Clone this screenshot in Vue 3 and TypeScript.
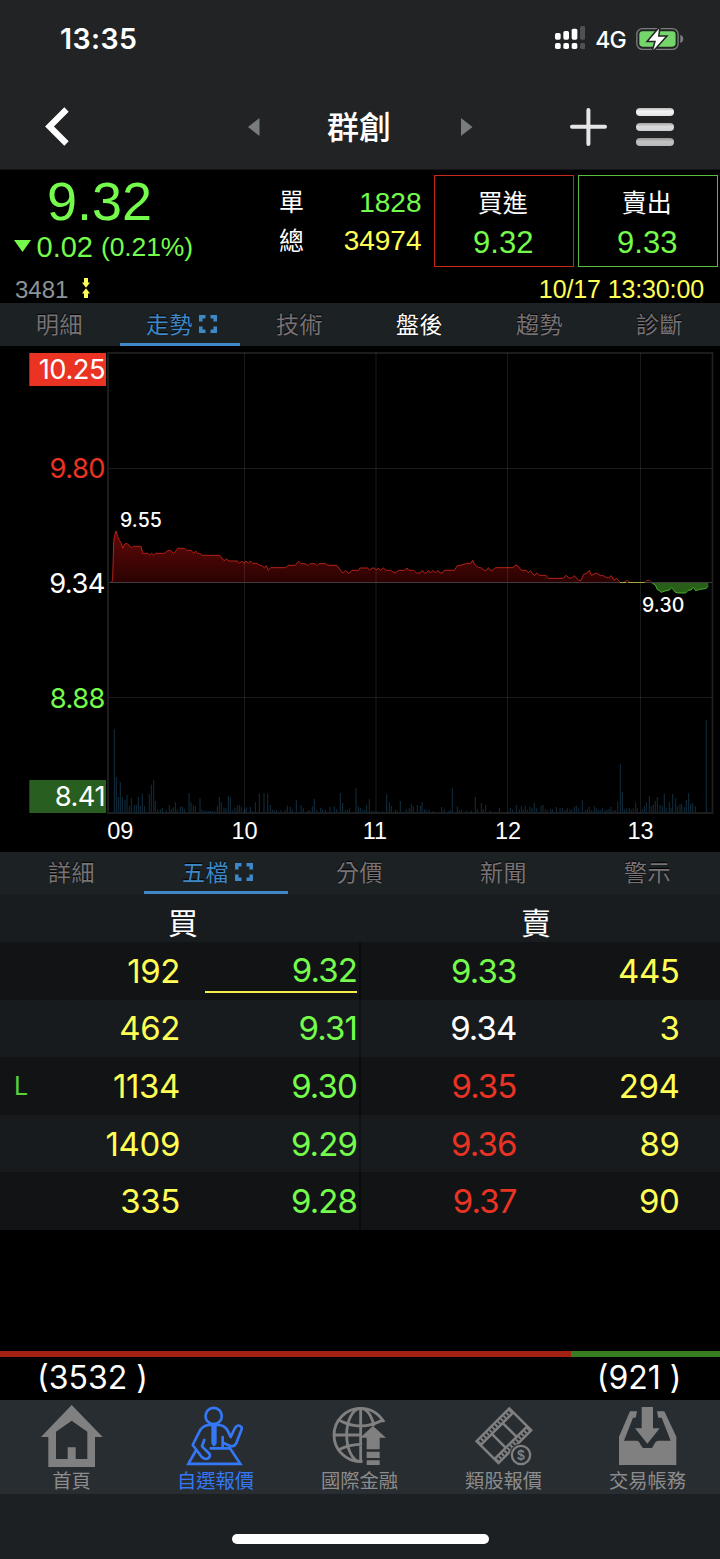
<script setup lang="ts">
interface Tab { label: string; state?: 'active' | 'bright' }
interface Level { bidQty: number; bid: string; ask: string; askQty: number; askTone: 'up' | 'down' | 'flat'; mark?: string; last?: boolean }

const topTabs: Tab[] = [
  { label: '明細' }, { label: '走勢', state: 'active' }, { label: '技術' },
  { label: '盤後', state: 'bright' }, { label: '趨勢' }, { label: '診斷' },
]
const lowerTabs: Tab[] = [
  { label: '詳細' }, { label: '五檔', state: 'active' }, { label: '分價' }, { label: '新聞' }, { label: '警示' },
]
const levels: Level[] = [
  { bidQty: 192, bid: '9.32', ask: '9.33', askQty: 445, askTone: 'down', last: true },
  { bidQty: 462, bid: '9.31', ask: '9.34', askQty: 3, askTone: 'flat' },
  { bidQty: 1134, bid: '9.30', ask: '9.35', askQty: 294, askTone: 'up', mark: 'L' },
  { bidQty: 1409, bid: '9.29', ask: '9.36', askQty: 89, askTone: 'up' },
  { bidQty: 335, bid: '9.28', ask: '9.37', askQty: 90, askTone: 'up' },
]
const bidTotal = 3532
const askTotal = 921
const bidShare = (bidTotal / (bidTotal + askTotal)) * 100 + '%'

// Series coordinates are in thirds of a pixel.
const rise = '335,1747 338,1738 341,1628 344,1606 348,1593 353,1610 359,1622 364,1630 368,1645 375,1631 382,1631 389,1638 394,1644 400,1639 423,1639 428,1660 443,1660 449,1665 455,1660 461,1665 467,1660 494,1660 502,1652 513,1652 521,1661 533,1645 554,1645 560,1651 573,1651 581,1660 587,1653 592,1660 599,1660 606,1666 659,1666 672,1682 680,1677 687,1683 712,1683 718,1690 725,1683 732,1690 738,1683 745,1690 751,1683 758,1690 772,1690 778,1696 785,1696 793,1704 799,1697 805,1711 812,1703 857,1703 864,1696 885,1696 896,1684 903,1691 915,1691 924,1697 930,1691 945,1691 951,1697 957,1691 977,1691 983,1696 1010,1696 1028,1719 1037,1711 1044,1719 1049,1719 1056,1711 1076,1711 1080,1704 1102,1704 1109,1710 1117,1704 1123,1704 1129,1710 1135,1704 1141,1711 1150,1704 1158,1711 1172,1711 1185,1720 1195,1711 1214,1711 1221,1704 1227,1711 1241,1711 1249,1719 1260,1719 1267,1711 1273,1719 1279,1719 1285,1711 1291,1719 1299,1711 1306,1719 1314,1711 1320,1719 1327,1719 1333,1711 1363,1711 1372,1697 1386,1695 1400,1690 1413,1690 1418,1681 1424,1694 1435,1702 1444,1704 1453,1711 1459,1711 1465,1703 1471,1711 1478,1711 1486,1703 1540,1703 1545,1696 1552,1696 1564,1711 1579,1711 1585,1718 1591,1712 1603,1727 1610,1719 1619,1726 1638,1726 1645,1735 1689,1735 1699,1726 1707,1734 1715,1734 1723,1727 1735,1741 1743,1741 1751,1723 1761,1719 1768,1711 1774,1726 1789,1719 1801,1727 1808,1726 1820,1733 1827,1733 1834,1727 1842,1741 1849,1735 1860,1747'
const fall = '1953,1747 1966,1755 1972,1769 1978,1772 1984,1777 1998,1772 2009,1770 2014,1763 2021,1770 2026,1777 2036,1779 2057,1779 2064,1771 2073,1770 2080,1762 2087,1772 2099,1768 2110,1767 2118,1765 2125,1759'
const early = '343,148 349,291 355,351 361,306 367,352 375,360 381,345 388,378 394,354 403,376 409,374 415,351 421,377 427,342 434,378 448,342 454,314 461,300 466,363 473,388 481,388 487,384 499,390 508,375 514,387 520,382 526,367 532,388 541,381 547,379 553,386 567,339 573,367 580,376 586,378 600,354 606,389 613,393 619,392 625,393 631,393 637,393 643,394 652,379 658,351 664,367 672,382 678,385 685,348 691,352 697,390 705,384 712,377 718,375 724,380 733,387 739,382 751,381 757,393 766,367 778,341 792,339 803,341 811,375 817,389 823,391 830,391 843,390 856,390 862,377 871,381 877,390 889,360 903,375 910,384 922,393 928,390 937,379 943,357 950,390 962,384 968,388 976,390 990,381 1003,379 1010,388 1021,339 1028,369 1036,391 1042,389 1049,385 1068,325 1075,379'
const late = '1,384 8,390 15,389 20,376 28,358 35,393 42,394 55,394 68,394 80,343 88,367 94,377 106,389 112,392 121,363 139,388 148,384 154,373 160,379 172,375 181,378 186,366 193,388 199,389 207,389 220,394 245,381 253,388 265,394 271,390 277,324 292,379 298,391 304,390 319,393 334,392 346,351 352,388 364,369 370,388 377,375 390,392 418,383 451,384 458,389 469,375 478,388 484,379 490,388 496,377 502,389 510,381 516,385 523,368 529,384 543,378 549,375 556,388 562,391 571,387 577,388 589,381 600,385 607,384 615,390 622,385 630,388 636,389 643,380 649,377 656,385 667,361 676,391 682,387 688,381 695,390 703,378 709,385 715,389 721,391 727,383 735,391 741,389 747,387 753,381 760,391 766,390 773,366 781,252 787,337 793,387 800,385 808,384 814,389 820,385 827,367 832,385 847,387 853,379 859,367 868,348 874,379 880,373 886,363 892,351 900,375 907,378 913,342 919,384 928,366 933,384 938,342 947,355 953,378 960,373 965,373 973,381 979,360 986,340 992,373 998,369 1006,379 1039,121'
const bars = (src: string, shift: number): string =>
  src.split(' ').map((p) => {
    const [x, y] = p.split(',').map(Number)
    return `M${x + shift} 2438V${y + 2040}`
  }).join('')
const volume = bars(early, 0) + bars(late, 1080)
</script>

<template>
  <div class="screen">
    <header class="top">
      <div class="status">
        <span class="clock">13:35</span>
        <div class="status-right">
          <svg class="signal" viewBox="586 78 92 69">
            <g fill="#fff">
              <rect x="586" y="99" width="17" height="20" rx="5" /><rect x="611" y="93" width="17" height="26" rx="5" /><rect x="636" y="86" width="17" height="33" rx="5" />
              <rect x="586" y="129" width="17" height="18" rx="5" /><rect x="611" y="129" width="17" height="18" rx="5" /><rect x="636" y="129" width="17" height="18" rx="5" />
            </g>
            <g fill="#505153"><rect x="661" y="78" width="16" height="41" rx="5" /><rect x="661" y="129" width="16" height="18" rx="5" /></g>
          </svg>
          <span class="network">4G</span>
          <svg class="battery" viewBox="830 82 143 66">
            <rect x="832.5" y="84" width="124" height="62" rx="17" fill="none" stroke="#7b7c7e" stroke-width="4" />
            <rect x="840" y="92" width="109" height="46" rx="10" fill="#75d66b" />
            <path d="M963 103q9 3 9 12t-9 12z" fill="#7b7c7e" />
            <path d="M899 84l-31 36h22l-8 28 36-40h-22z" fill="#fff" stroke="#222325" stroke-width="9" paint-order="stroke" />
          </svg>
        </div>
      </div>
      <nav class="nav">
        <svg class="back" viewBox="0 0 26 40"><path d="M21.5 2.5L4.5 19.5 21.5 36.5" fill="none" stroke="#fff" stroke-width="6.2" /></svg>
        <svg class="arrow prev" viewBox="0 0 12 18"><path d="M0 9L11.5 0v18z" /></svg>
        <h1>群創</h1>
        <svg class="arrow next" viewBox="0 0 12 18"><path d="M11.5 9L0 0v18z" /></svg>
        <svg class="plus" viewBox="0 0 37 38"><path d="M2 18.7H35M18.4 2V36" fill="none" stroke="#e6e6e6" stroke-width="4" stroke-linecap="round" /></svg>
        <div class="menu"><i></i><i></i><i></i></div>
      </nav>
    </header>

    <section class="quote">
      <div class="quote-main">
        <div class="price">
          <strong>9.32</strong>
          <div class="change">
            <svg viewBox="0 0 17 12"><path d="M0 0H17L8.5 12z" fill="#75fb4c" /></svg>
            <span class="diff">0.02</span><span class="pct">(0.21%)</span>
          </div>
        </div>
        <div class="volumes">
          <div><span>單</span><b class="down">1828</b></div>
          <div><span>總</span><b class="qty">34974</b></div>
        </div>
        <div class="deal buy"><span>買進</span><b>9.32</b></div>
        <div class="deal sell"><span>賣出</span><b>9.33</b></div>
      </div>
      <div class="meta">
        <span class="code">3481</span>
        <svg viewBox="0 0 8 20"><path d="M2 0H6V4.5H8L4 9.7 0 4.5H2zM4 10.3L8 15.5H6V20H2V15.5H0z" fill="#ffff54" /></svg>
        <time>10/17 13:30:00</time>
      </div>
    </section>

    <div class="tabs six">
      <div v-for="t in topTabs" :key="t.label" class="tab" :class="t.state">
        <span>{{ t.label }}</span>
        <svg v-if="t.state === 'active'" viewBox="0 0 18 18"><path d="M1.8 6.5V1.8H6.5M11.5 1.8H16.2V6.5M16.2 11.5V16.2H11.5M6.5 16.2H1.8V11.5" /></svg>
      </div>
    </div>

    <svg class="chart" viewBox="0 346 720 505.5">
      <defs>
        <linearGradient id="riseFill" x1="0" y1="1593" x2="0" y2="1747" gradientUnits="userSpaceOnUse">
          <stop offset="0" stop-color="#610908" /><stop offset="1" stop-color="#2b0202" />
        </linearGradient>
      </defs>
      <rect x="108" y="353" width="604.5" height="460" fill="none" stroke="#212121" stroke-width="1.7" />
      <g transform="scale(.333333)">
        <polygon :points="rise" fill="url(#riseFill)" />
        <polyline :points="rise" fill="none" stroke="#b62018" stroke-width="3" />
        <path d="M1872 1747L1881 1741 1889 1747M1935 1747L1940 1741H1949L1956 1749" fill="none" stroke="#92221a" stroke-width="3" />
        <polygon :points="fall + ' 2125,1747'" fill="#285f19" />
        <polyline :points="fall" fill="none" stroke="#49ab30" stroke-width="3" />
        <path :d="volume" stroke="#102b3b" stroke-width="3.3" />
      </g>
      <path d="M109 468.5H712M109 697.5H712M244.5 353V813M376 353V813M507.5 353V813M640.5 353V813" stroke="#fff" stroke-opacity=".1" />
      <path d="M109 582.5H712" stroke="#423a3e" stroke-width="1" />
      <path d="M620 582.5H626M628.5 582.5H645" stroke="#aaa83f" stroke-width="1" />
      <rect x="29.3" y="353" width="76.7" height="33" fill="#eb3323" />
      <rect x="29.3" y="780" width="76.7" height="33" fill="#285f20" />
      <g class="axis" text-anchor="end">
        <text x="105" y="379" fill="#fff">10.25</text>
        <text x="105" y="477.5" fill="#eb3323">9.80</text>
        <text x="105" y="592.5" fill="#fff">9.34</text>
        <text x="105" y="707.5" fill="#75fb4c">8.88</text>
        <text x="105" y="805.5" fill="#fff">8.41</text>
      </g>
      <g class="peak" fill="#fff"><text x="120" y="526.5">9.55</text><text x="642" y="611.5">9.30</text></g>
      <g class="hours" fill="#fff" text-anchor="middle">
        <text x="120.3" y="838.5">09</text><text x="244.5" y="838.5">10</text><text x="375" y="838.5">11</text><text x="508" y="838.5">12</text><text x="640.5" y="838.5">13</text>
      </g>
    </svg>

    <div class="tabs five">
      <div v-for="t in lowerTabs" :key="t.label" class="tab" :class="t.state">
        <span>{{ t.label }}</span>
        <svg v-if="t.state === 'active'" viewBox="0 0 18 18"><path d="M1.8 6.5V1.8H6.5M11.5 1.8H16.2V6.5M16.2 11.5V16.2H11.5M6.5 16.2H1.8V11.5" /></svg>
      </div>
    </div>

    <section class="book">
      <div class="book-head"><span>買</span><span>賣</span></div>
      <div v-for="l in levels" :key="l.bid" class="level">
        <span class="mark">{{ l.mark }}</span>
        <span class="qty">{{ l.bidQty }}</span>
        <span class="bid down" :class="{ last: l.last }">{{ l.bid }}</span>
        <span :class="l.askTone">{{ l.ask }}</span>
        <span class="qty">{{ l.askQty }}</span>
      </div>
    </section>

    <section class="totals">
      <div class="balance"><i :style="{ width: bidShare }"></i></div>
      <div class="sums"><span>({{ bidTotal }}<em>)</em></span><span>({{ askTotal }}<em>)</em></span></div>
    </section>

    <footer class="bottom">
      <div class="item">
        <svg viewBox="0 180 432 204"><path fill-rule="evenodd" d="M215 195L308 291H285V381H145V291H123zM168 275L215 242 262 275V357H227V322H203V357H168z" fill="#808080" /></svg>
        <span>首頁</span>
      </div>
      <div class="item selected">
        <svg viewBox="432 180 432 204">
          <g fill="none" stroke="#3478f6" stroke-width="8" stroke-linejoin="round" stroke-linecap="round">
            <circle cx="641" cy="228" r="24.5" />
            <path d="M625 255C609 257 603 264 597 277L578 315 600 344Q609 357 620 357 632 353 629 342L606 319 613 300" />
            <path d="M625 255H657C675 257 681 265 692 291L705 264Q714 250 725 262V268L709 309Q703 323 689 317L669 308M668 291V323" />
            <path d="M587 333L565 371.5H721L690 325H632" stroke-linejoin="miter" />
            <path d="M638 257V309L642 315 646 309V257" />
          </g>
        </svg>
        <span>自選報價</span>
      </div>
      <div class="item">
        <svg viewBox="864 180 432 204">
          <clipPath id="globeClip"><path d="M980 190H1160V243L1112 262 1087 279V380H980z" /></clipPath>
          <g clip-path="url(#globeClip)" fill="none" stroke="#808080" stroke-width="8.5">
            <circle cx="1082" cy="285" r="80" /><ellipse cx="1082" cy="285" rx="42" ry="80" />
            <path d="M1082 204V368M1002 285H1082M1016 240Q1082 276 1148 240M1016 329Q1048 313 1088 313" />
          </g>
          <path d="M1119 258L1158 293H1139V328H1100V293H1080zM1100 335H1139V354H1100zM1100 361H1139V375H1100z" fill="#808080" />
        </svg>
        <span>國際金融</span>
      </div>
      <div class="item">
        <svg viewBox="1296 180 432 204">
          <g transform="translate(1528 201) rotate(135)" fill="none" stroke="#808080">
            <path d="M3 -3H142V-96H3zM3 -20H142M3 -79H142M48 -79V-20M94 -79V-20" stroke-width="7.5" />
            <path d="M4 -11.5H142M4 -87.5H142" stroke-width="10" stroke-dasharray="6 6" />
          </g>
          <circle cx="1563" cy="345" r="34" fill="#282d31" />
          <circle cx="1563" cy="345" r="27.5" fill="none" stroke="#808080" stroke-width="7" />
          <text x="1563" y="360" text-anchor="middle" class="coin">$</text>
        </svg>
        <span>類股報價</span>
      </div>
      <div class="item">
        <svg viewBox="1728 180 432 204">
          <path d="M1925 201H1959V265H1979L1942 311 1905 265H1925zM1857 375V290L1890 214H1911L1907 233H1899L1872 302H1911Q1918 303 1922 315L1929 324H1956L1963 312Q1966 303 1974 302H2012L1985 233H1975L1971 214H1993L2029 290V375z" fill="#808080" />
        </svg>
        <span>交易帳務</span>
      </div>
    </footer>
    <div class="home-area"><i></i></div>
  </div>
</template>

<style>
html, body { background: #000; }
</style>

<style scoped>
* { box-sizing: border-box; }
.screen { width: 720px; height: 1559px; overflow: hidden; display: flex; flex-direction: column; background: #000; color: #fff; font-family: "Liberation Sans", "Noto Sans CJK TC", sans-serif; }
b, em, i, h1, strong { font-weight: 400; font-style: normal; margin: 0; }
svg { display: block; flex: none; }

.top { height: 170px; background: #222325; border-bottom: 1px solid #151517; flex: none; }
.status { height: 84px; display: flex; align-items: center; justify-content: space-between; padding: 0 36px 6px 60px; }
.clock { font: 600 28.5px/34px Inter, sans-serif; letter-spacing: .4px; }
.status-right { display: flex; align-items: center; }
.signal { width: 30.7px; height: 23px; margin-top: -3px; }
.network { font: 500 23px/28px Inter, sans-serif; letter-spacing: -.8px; margin: 1px 0 0 10px; }
.battery { width: 47.6px; height: 22px; margin: -1px 0 0 10.5px; }
.nav { height: 85px; display: flex; align-items: center; padding-left: 45px; }
.back { width: 26px; height: 40px; margin-top: 1px; }
.arrow { width: 12px; height: 18px; fill: #777d7f; }
.prev { margin-left: 177px; }
.nav h1 { width: 66px; margin: 2px 0 0 67px; font-size: 32px; line-height: 40px; font-weight: 500; }
.next { margin-left: 67.5px; }
.plus { width: 37px; height: 38px; margin: 1px 0 0 97px; }
.menu { width: 38px; height: 38px; margin: 0 0 0 29px; display: flex; flex-direction: column; justify-content: space-between; }
.menu i { height: 8px; border-radius: 4px; background: linear-gradient(#b9b9b9, #f5f5f5 40%, #e3e3e3); }
.menu i:nth-child(2) { background: linear-gradient(#a4a4a4, #dadada 45%, #cfcfcf); }
.menu i:nth-child(3) { background: linear-gradient(#969696, #c2c2c2 45%, #b9b9b9); }

.quote { height: 133px; flex: none; }
.quote-main { display: grid; grid-template-columns: 270px 164px 140px 140px; height: 102px; }
.price { padding-left: 14px; }
.price strong { display: block; font-size: 54px; line-height: 60px; color: #75fb4c; padding: 1px 0 0 33px; }
.change { display: flex; align-items: center; height: 34px; color: #75fb4c; }
.change svg { width: 17px; height: 12px; margin-top: -4px; }
.diff { font-size: 29px; margin: -1px 0 0 5.5px; }
.pct { font-size: 26.5px; margin-left: 8px; margin-top: -1px; letter-spacing: -.1px; }
.volumes { padding: 13px 12.5px 0 9px; }
.volumes div { display: flex; justify-content: space-between; height: 38.5px; line-height: 38.5px; font-size: 28px; }
.volumes b { margin-top: .5px; }
.volumes span { font-size: 25px; }
.deal { width: 139.5px; margin-top: 4.5px; height: 92.5px; display: flex; flex-direction: column; align-items: center; padding-top: 8px; border: 1.3px solid #c72a1c; }
.deal.sell { margin-left: 4px; border-color: #58bd3a; }
.deal span { font-size: 25px; line-height: 38px; margin-left: -2px; }
.deal b { font-size: 31px; line-height: 42px; color: #75fb4c; margin-left: -1px; }
.meta { display: flex; align-items: center; height: 31px; padding: 4px 16px 0 15px; }
.code { font-size: 24px; color: #8d9497; }
.meta svg { width: 8px; height: 20px; margin: -3px 0 0 14px; }
.meta time { margin-left: auto; font-size: 25px; color: #ffff54; letter-spacing: -.12px; }
.down { color: #75fb4c; }
.up { color: #eb3323; }
.flat { color: #fff; }
.qty { color: #ffff54; }

.tabs { height: 42.5px; flex: none; display: grid; background: #1c2124; }
.six { grid-template-columns: repeat(6, 1fr); height: 43px; }
.five { grid-template-columns: repeat(5, 1fr); }
.tab { display: flex; justify-content: center; align-items: center; padding-top: 3px; font-size: 23px; line-height: 36px; color: #787275; letter-spacing: .5px; text-shadow: 0 -1px 1px #000; border-bottom: 3px solid transparent; }
.tab span { margin-left: -1px; }
.tab.bright { color: #fff; }
.tab.active { color: #3e88c7; border-bottom-color: #3e88c7; padding-left: 4px; }
.tab svg { width: 18px; height: 18px; margin: -1px 0 0 6px; }
.tab svg path { fill: none; stroke: #3e88c7; stroke-width: 3.6; }

.chart { width: 720px; height: 505.5px; }
.axis { font: 400 27.3px Inter, sans-serif; letter-spacing: -.5px; }
.peak { font: 500 19.5px Inter, sans-serif; letter-spacing: .1px; }
.hours { font-size: 23.5px; }

.book { flex: none; height: 336px; }
.book-head { height: 48px; display: grid; grid-template-columns: 366px 340px; background: #181c1f; font-size: 30px; line-height: 60px; text-align: center; }
.level { height: 57.6px; display: grid; grid-template-columns: 60px 120px 177px 159.5px 163px; align-items: center; font: 400 33px/56px Inter, sans-serif; text-align: right; letter-spacing: -.9px; background: linear-gradient(90deg, transparent 359px, #0a0b0c 359px 361px, transparent 361px), #121315; }
.level .qty { letter-spacing: -.4px; }
.level:nth-child(odd) { background: linear-gradient(90deg, transparent 359px, #101315 359px 361px, transparent 361px), #171b1e; }
.mark { text-align: left; padding-left: 14px; font-size: 25px; color: #58d43a; }
.bid { margin-left: 25px; }
.last { height: 50px; line-height: 55px; margin-top: -6px; border-bottom: 2px solid #f5ef4a; }

.totals { flex: 1; display: flex; flex-direction: column; justify-content: flex-end; }
.balance { height: 6px; background: #377e22; }
.balance i { display: block; height: 6px; background: #a32013; }
.sums { height: 42.5px; display: flex; justify-content: space-between; padding: 0 38.5px 0 37px; font: 400 32px/42px Inter, sans-serif; letter-spacing: 0; }
.sums em { margin-left: 9px; }

.bottom { height: 94.5px; flex: none; display: grid; grid-template-columns: repeat(5, 1fr); background: #282d31; }
.item svg { width: 144px; height: 68px; }
.item span { display: block; text-align: center; font-size: 19.3px; line-height: 28px; color: #8c8c8c; margin-left: -1px; }
.item.selected span { color: #3478f6; }
.coin { font: 700 42px "Liberation Sans", sans-serif; fill: #808080; }
.home-area { height: 65px; flex: none; background: #1c2023; padding-top: 40px; }
.home-area i { display: block; width: 257px; height: 10px; margin: 0 auto; border-radius: 5px; background: #fff; }
</style>
